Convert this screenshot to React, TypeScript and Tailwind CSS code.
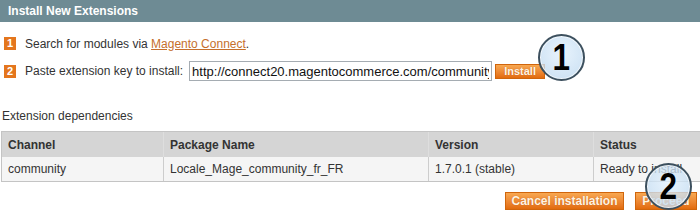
import React from "react";

// numbered step marker
function Step({ n }: { n: number }) {
  return (
    <span className="flex h-[13px] w-[12px] items-center justify-center bg-[#e4761d] text-[11px] font-bold leading-none text-white">
      {n}
    </span>
  );
}

function OrangeButton({ label, className }: { label: string; className?: string }) {
  return (
    <button
      type="button"
      className={
        "flex items-center justify-center border border-[#d0650c] bg-gradient-to-b from-[#f8a851] to-[#e26b0a] font-bold leading-none text-[#fff3e2] [text-shadow:0_0_1px_rgba(160,70,0,0.6)] " +
        (className ?? "")
      }
    >
      {label}
    </button>
  );
}

function Callout({ n, className }: { n: number; className: string }) {
  return (
    <div
      className={
        "absolute flex h-[47px] w-[47px] items-center justify-center rounded-full border-[2px] border-[#3d505e] bg-[radial-gradient(circle_at_50%_40%,rgba(226,240,252,0.78),rgba(184,213,238,0.78))] shadow-[inset_0_0_0_1px_rgba(255,255,255,0.7)] " +
        className
      }
    >
      <span className="inline-block scale-x-[0.85] text-[37px] font-bold leading-none text-black">{n}</span>
    </div>
  );
}

const columns = ["Channel", "Package Name", "Version", "Status"];
const row = ["community", "Locale_Mage_community_fr_FR", "1.7.0.1 (stable)", "Ready to install"];

export default function App() {
  return (
    <div className="relative h-[215px] w-[700px] overflow-hidden bg-white font-['Liberation_Sans',Arial,sans-serif] text-[12px] text-[#333]">
      <div className="flex h-[22px] items-center bg-[#6e8b94] pl-[8px] font-bold text-white">
        Install New Extensions
      </div>

      <div className="pl-[4px] pt-[15px]">
        <div className="flex h-[13px] items-center">
          <Step n={1} />
          <span className="ml-[9px]">
            Search for modules via{" "}
            <a className="text-[#c56f2c] underline" href="#">
              Magento Connect
            </a>
            .
          </span>
        </div>
        <div className="mt-[11px] flex h-[20px] items-center">
          <Step n={2} />
          <span className="ml-[9px]">Paste extension key to install:</span>
          <input
            readOnly
            value="http://connect20.magentocommerce.com/community/Locale_Mage_community_fr_FR"
            className="ml-[6px] h-[20px] w-[303px] border border-[#a5acb2] bg-white px-[2px] text-[13px] text-[#111] outline-none"
          />
          <OrangeButton label="Install" className="ml-[3px] h-[15px] w-[50px] text-[11px]" />
        </div>
      </div>

      <div className="mt-[28px] pl-[2px] leading-[14px]">Extension dependencies</div>

      <div className="ml-[1px] mt-[8px] w-[712px] border border-[#c4c4c4]">
        <div className="grid h-[25px] grid-cols-[161px_265px_165px_1fr] bg-[#d5d5d5] font-bold">
          {columns.map((c, i) => (
            <div key={c} className={"flex items-center pl-[6px] " + (i > 0 ? "border-l border-[#dedede]" : "")}>
              {c}
            </div>
          ))}
        </div>
        <div className="grid h-[24px] grid-cols-[161px_265px_165px_1fr] bg-[#f5f5f5]">
          {row.map((c, i) => (
            <div key={c} className={"flex items-center pl-[6px] " + (i > 0 ? "border-l border-[#cdcdcd]" : "")}>
              {c}
            </div>
          ))}
        </div>
      </div>

      <div className="mt-[10px] flex justify-end gap-[11px] pr-[3px]">
        <OrangeButton label="Cancel installation" className="h-[18px] w-[119px] text-[12px]" />
        <OrangeButton label="Proceed" className="h-[18px] w-[62px] text-[12px]" />
      </div>

      <Callout n={1} className="left-[538px] top-[34px]" />
      <Callout n={2} className="left-[645px] top-[163px]" />
    </div>
  );
}
